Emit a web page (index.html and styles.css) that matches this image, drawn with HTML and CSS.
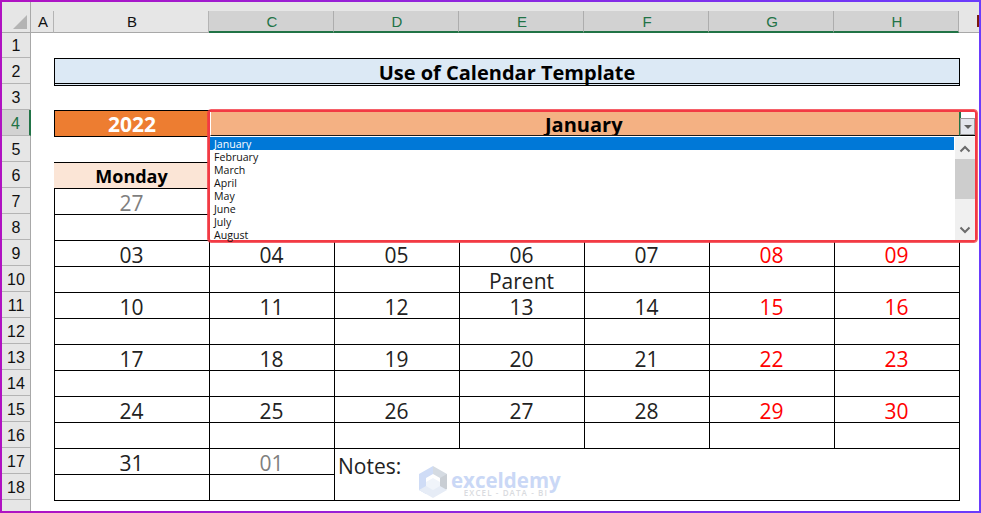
FILE: index.html
```html
<!DOCTYPE html>
<html lang="en">
<head>
<meta charset="utf-8">
<title>Use of Calendar Template</title>
<link rel="stylesheet" href="styles.css">
</head>
<body>
<div class="frame">
  <div class="sheet">
    <div class="corner"><span class="corner-tri"></span></div>
    <div class="colheads">
      <div class="ch w-a">A</div>
      <div class="ch w-b">B</div>
      <div class="ch w-n sel">C</div>
      <div class="ch w-n sel">D</div>
      <div class="ch w-n sel">E</div>
      <div class="ch w-n sel">F</div>
      <div class="ch w-n sel">G</div>
      <div class="ch w-n sel">H</div>
      <div class="ch w-i"><span class="cut-i"></span></div>
    </div>
    <div class="rowheads">
      <div class="rh first">1</div>
      <div class="rh">2</div>
      <div class="rh">3</div>
      <div class="rh sel">4</div>
      <div class="rh">5</div>
      <div class="rh">6</div>
      <div class="rh">7</div>
      <div class="rh">8</div>
      <div class="rh">9</div>
      <div class="rh">10</div>
      <div class="rh">11</div>
      <div class="rh">12</div>
      <div class="rh">13</div>
      <div class="rh">14</div>
      <div class="rh">15</div>
      <div class="rh">16</div>
      <div class="rh">17</div>
      <div class="rh">18</div>
      <div class="rh-rest"></div>
    </div>
    <div class="body">
      <div class="title">Use of Calendar Template</div>
      <div class="yearrow">
        <div class="year">2022</div>
        <div class="month"></div>
      </div>
      <div class="cal">
        <div class="c head">Monday</div><div class="c span6"></div>
        <div class="c grey">27</div><div class="c span6"></div>
        <div class="c"></div><div class="c span6"></div>

        <div class="c">03</div><div class="c">04</div><div class="c">05</div><div class="c">06</div><div class="c">07</div><div class="c red">08</div><div class="c red">09</div>
        <div class="c"></div><div class="c"></div><div class="c"></div><div class="c">Parent</div><div class="c"></div><div class="c"></div><div class="c"></div>
        <div class="c">10</div><div class="c">11</div><div class="c">12</div><div class="c">13</div><div class="c">14</div><div class="c red">15</div><div class="c red">16</div>
        <div class="c"></div><div class="c"></div><div class="c"></div><div class="c"></div><div class="c"></div><div class="c"></div><div class="c"></div>
        <div class="c">17</div><div class="c">18</div><div class="c">19</div><div class="c">20</div><div class="c">21</div><div class="c red">22</div><div class="c red">23</div>
        <div class="c"></div><div class="c"></div><div class="c"></div><div class="c"></div><div class="c"></div><div class="c"></div><div class="c"></div>
        <div class="c">24</div><div class="c">25</div><div class="c">26</div><div class="c">27</div><div class="c">28</div><div class="c red">29</div><div class="c red">30</div>
        <div class="c"></div><div class="c"></div><div class="c"></div><div class="c"></div><div class="c"></div><div class="c"></div><div class="c"></div>
        <div class="c">31</div><div class="c grey">01</div><div class="c notes">Notes:</div>
        <div class="c"></div><div class="c"></div>
      </div>
    </div>
  </div>

  <div class="dropdown">
    <div class="dd-cell">
      <div class="dd-fill">January</div>
      <div class="dd-side"><span class="dd-btn"><span class="dd-caret"></span></span></div>
    </div>
    <div class="dd-panel">
      <ul class="dd-list">
        <li class="on">January</li>
        <li>February</li>
        <li>March</li>
        <li>April</li>
        <li>May</li>
        <li>June</li>
        <li>July</li>
        <li>August</li>
      </ul>
      <div class="dd-scroll">
        <svg class="sb-arrow" viewBox="0 0 20 22" width="20" height="22"><path d="M5.5 14.5L10 10l4.500 4.500" fill="none" stroke="#6b6b6b" stroke-width="2"/></svg>
        <div class="sb-thumb"></div>
        <div class="sb-track"></div>
        <svg class="sb-arrow" viewBox="0 0 20 22" width="20" height="22"><path d="M5.500 9.500L10 14l4.500-4.500" fill="none" stroke="#6b6b6b" stroke-width="2"/></svg>
      </div>
    </div>
  </div>

  <div class="mark">
    <svg class="mark-logo" viewBox="0 0 28 32" width="28" height="32">
      <path d="M14 0L28 8v8l-7-4-7-4z" fill="#d5dbe2"/>
      <path d="M14 0L0 8v16l7 4V12l7-4z" fill="#cfdcf6"/>
      <path d="M28 8v15l-7 4V12z" fill="#c9ced4"/>
      <path d="M14 12l7 4v8l-7 4-7-4v-8z" fill="#f0f4fa"/>
      <path d="M0 24l14 8 14-8-7-4-7 4-7-4z" fill="#e6ecf6"/>
    </svg>
    <div class="mark-text">
      <div class="mark-name">exceldemy</div>
      <div class="mark-sub">EXCEL - DATA - BI</div>
    </div>
  </div>
</div>
</body>
</html>
```
FILE: styles.css
```css
* { box-sizing: border-box; }
html, body { margin: 0; padding: 0; background: #fff; }
body { width: 981px; height: 513px; overflow: hidden; }

.frame {
  position: relative;
  width: 981px;
  height: 513px;
  border: 2px solid;
  border-image: linear-gradient(90deg, #b012c2, #6a3cfc) 1;
  background: #fff;
  overflow: hidden;
}

.sheet {
  display: grid;
  grid-template-columns: 29px 948px;
  grid-template-rows: 31px 478px;
  height: 509px;
  font-family: "Liberation Sans", Arial, sans-serif;
}

/* corner + headers */
.corner {
  position: relative;
  background: #e6e6e6;
  border-right: 1px solid #a8a8a8;
  border-bottom: 1px solid #a8a8a8;
}
.corner-tri {
  position: absolute;
  right: 3px;
  bottom: 3px;
  width: 0;
  height: 0;
  border-style: solid;
  border-width: 0 0 14px 14px;
  border-color: transparent transparent #b4b4b4 transparent;
}
.colheads {
  display: flex;
  background: #e6e6e6;
  padding-top: 9px;
}
.ch {
  display: flex;
  align-items: center;
  justify-content: center;
  font-size: 15px;
  color: #111;
  border-right: 1px solid #b4b4b4;
  border-bottom: 1px solid #a8a8a8;
  height: 22px;
  padding-left: 2px;
  padding-bottom: 1px;
}
.w-a { width: 23px; }
.w-b { width: 155px; }
.w-n { width: 125px; }
.w-i { width: 20px; border-right: 0; justify-content: flex-end; }
.ch.sel {
  background: #d2d2d2;
  color: #217346;
  border-bottom: 2px solid #217346;
  border-right-color: #adadad;
  padding-bottom: 0;
}
.cut-i { width: 2px; height: 12px; background: #7a1a10; margin-bottom: 1px; }

.rowheads {
  display: flex;
  flex-direction: column;
  background: #e6e6e6;
  border-right: 1px solid #a8a8a8;
}
.rh {
  height: 26px;
  display: flex;
  align-items: center;
  justify-content: center;
  font-size: 16px;
  color: #111;
  border-bottom: 1px solid #b4b4b4;
  padding-top: 2px;
}
.rh.first { height: 25px; }
.rh.sel {
  background: #d2d2d2;
  color: #217346;
  border-right: 2px solid #217346;
  margin-right: -1px;
}
.rh-rest { flex: 1; }

/* worksheet body */
.body {
  padding: 25px 0 0 23px;
  font-family: "Open Sans", "Noto Sans", sans-serif;
  color: #111;
  background: #fff;
}
.title {
  width: 906px;
  height: 28px;
  background: #dce9f5;
  border: 1px solid #000;
  border-bottom: 3px double #000;
  font-size: 20px;
  font-weight: 700;
  line-height: 27px;
  text-align: center;
  color: #000;
}
.yearrow {
  display: flex;
  width: 906px;
  height: 27px;
  margin-top: 24px;
  border: 1px solid #000;
}
.year {
  width: 154px;
  background: #ed7d31;
  color: #fff;
  font-size: 21px;
  font-weight: 700;
  line-height: 27px;
  text-align: center;
}
.month {
  flex: 1;
  background: #f4b183;
}
.cal {
  display: grid;
  grid-template-columns: 155px repeat(6, 125px);
  grid-auto-rows: 26px;
  width: 906px;
  margin-top: 25px;
  border-top: 1px solid #000;
  border-left: 1px solid #000;
}
.c {
  border-right: 1px solid #000;
  border-bottom: 1px solid #000;
  font-size: 21px;
  line-height: 28px;
  text-align: center;
  color: #222;
  margin-left: -1px;
}
.span6 { grid-column: span 6; }
.head {
  background: #fbe5d6;
  font-size: 18px;
  font-weight: 700;
  line-height: 27px;
  color: #000;
}
.grey { color: #7f7f7f; }
.red { color: #ff0000; }
.notes {
  grid-column: 3 / 8;
  grid-row: span 2;
  text-align: left;
  padding-left: 4px;
  padding-top: 3px;
}

/* data validation dropdown */
.dropdown {
  position: absolute;
  left: 206px;
  top: 108px;
  width: 769px;
  height: 132px;
  display: flex;
  flex-direction: column;
  border: 2px solid #f23a44;
  border-radius: 3px;
  outline: 1px solid rgba(242, 58, 68, .8);
  background: #fff;
}
.dd-cell { display: flex; height: 24px; flex: none; }
.dd-fill {
  width: 749px;
  height: 24px;
  background: #f4b183;
  border-left: 1px solid #fff;
  border-bottom: 1px solid #1a1a1a;
  padding-left: 334px;
  font-family: "Open Sans", "Noto Sans", sans-serif;
  font-size: 20px;
  font-weight: 700;
  line-height: 25px;
  overflow: hidden;
  color: #000;
}
.dd-side {
  flex: 1;
  display: flex;
  align-items: flex-end;
  border-left: 2px solid #217346;
  border-bottom: 1px solid #000;
}
.dd-btn {
  width: 15px;
  height: 17px;
  margin-left: -1px;
  background: #e3e5ec;
  border: 1px solid #9a9a9a;
  display: flex;
  align-items: center;
  justify-content: center;
}
.dd-caret {
  width: 0;
  height: 0;
  border-style: solid;
  border-width: 4px 4px 0 4px;
  border-color: #606060 transparent transparent transparent;
}
.dd-panel { flex: 1; display: flex; min-height: 0; margin-top: 1px; }
.dd-list {
  list-style: none;
  margin: 0;
  padding: 0;
  width: 744px;
  font-family: "Open Sans", "Noto Sans", sans-serif;
  font-size: 10.6px;
  color: #111;
}
.dd-list li { height: 13px; line-height: 15px; padding-left: 4px; }
.dd-list li.on { background: #0078d7; color: #fff; }
.dd-scroll {
  width: 20px;
  margin-left: 1px;
  display: flex;
  flex-direction: column;
  background: #f0f0f0;
}
.sb-arrow { display: block; flex: none; }
.sb-thumb { height: 40px; flex: none; background: #cdcdcd; }
.sb-track { flex: 1; }

/* watermark */
.mark {
  position: absolute;
  left: 417px;
  top: 464px;
  display: flex;
  gap: 4px;
}
.mark-logo { display: block; }
.mark-text { display: flex; flex-direction: column; align-items: center; }
.mark-name {
  font-family: "Open Sans", sans-serif;
  font-size: 20.500px;
  font-weight: 700;
  line-height: 18px;
  color: #cad8f6;
  margin-top: 5px;
}
.mark-sub {
  font-family: "Open Sans", sans-serif;
  font-size: 8px;
  font-weight: 600;
  letter-spacing: 1.1px;
  line-height: 8px;
  color: #d9dbe0;
}
```
